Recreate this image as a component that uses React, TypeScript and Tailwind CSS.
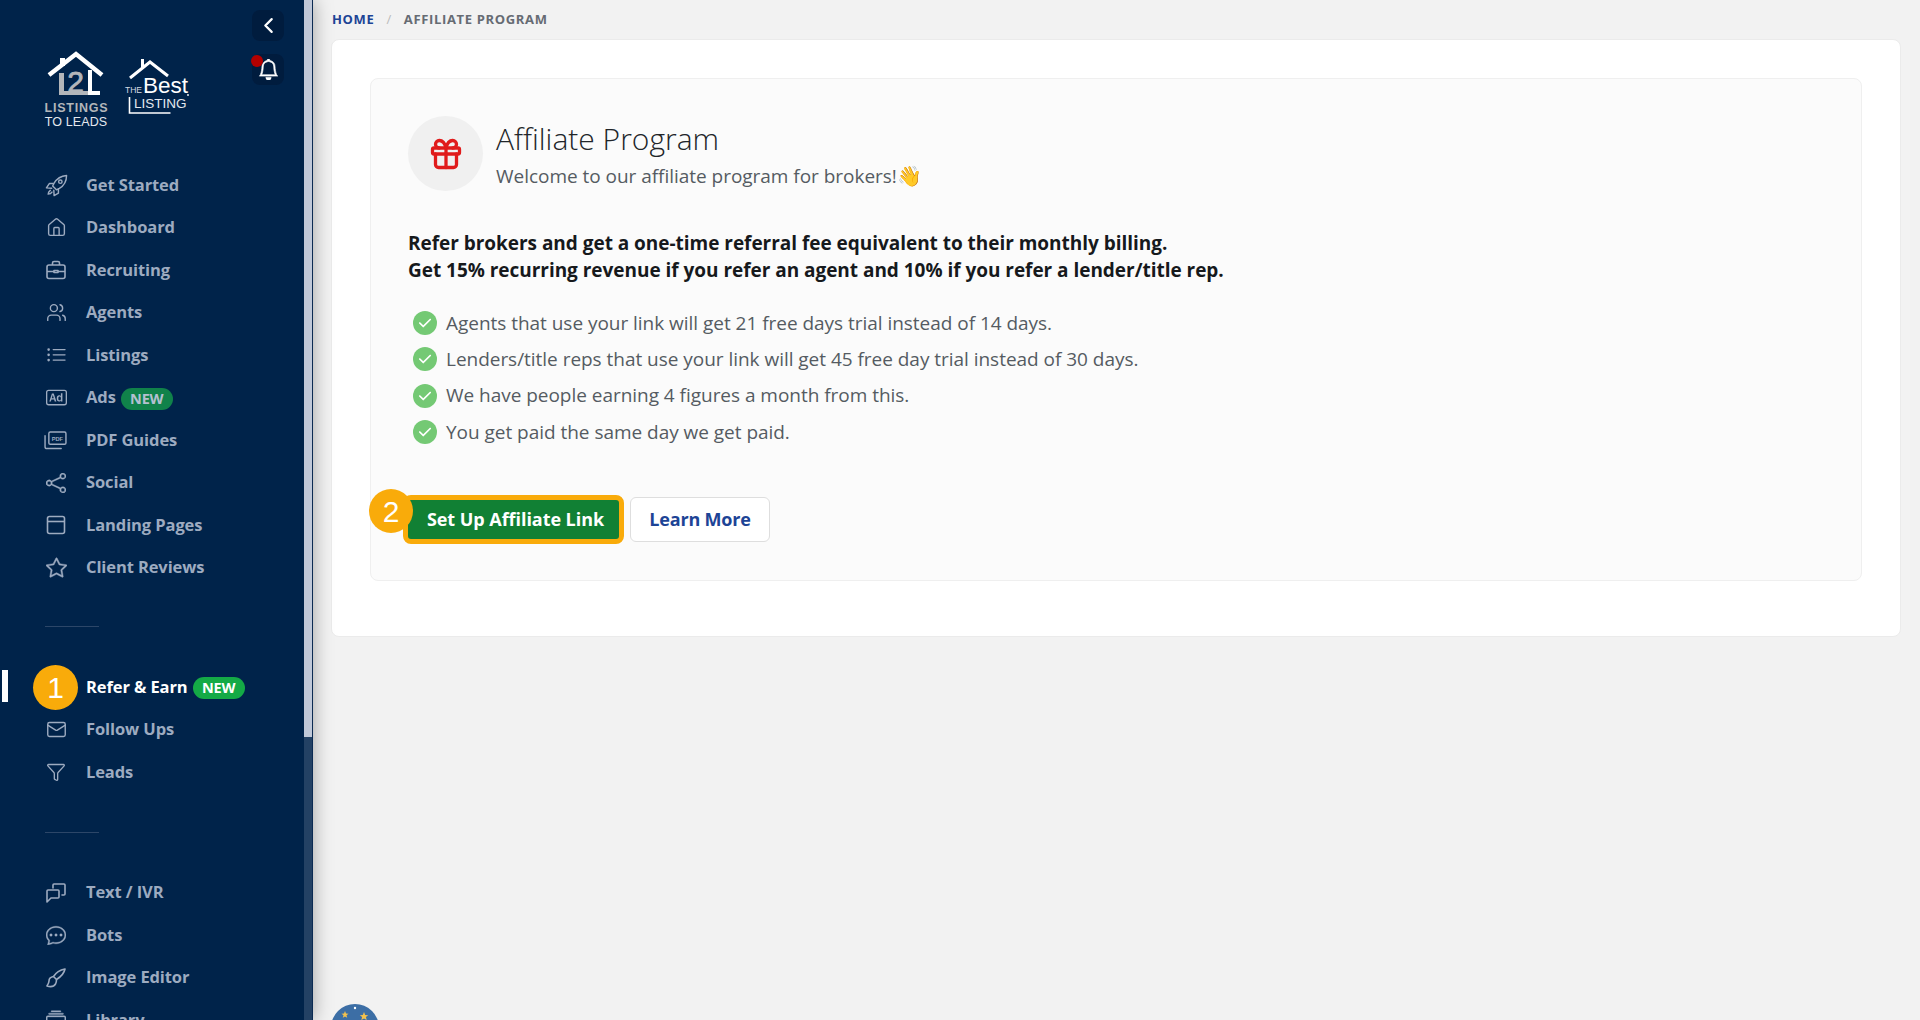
import { BsBadgeAd, BsBell, BsChatDots, BsChevronLeft, BsCollection, BsListUl, BsShare, BsStar } from "react-icons/bs";
import { Funnel, Gift, House, Mail, Users } from "lucide-react";
import { FaCheck } from "react-icons/fa6";
import type { ReactNode } from "react";

function RocketIcon() {
  return (
    <svg viewBox="0 0 24 24" className="-ml-[1px] h-[23px] w-[23px]" fill="none" stroke="currentColor" strokeWidth="1.5" strokeLinejoin="round" strokeLinecap="round">
      <path d="M22.500 1.500c-6 .5-10 3-13 8l-1.500 3 4 4 3-1.500c5-3 7.500-7 7.500-13.500z" />
      <path d="M8.500 10H4.500L1.500 14.500l5.500.3M14 15.500V20l-4.500 2.500-.3-5.500" />
      <circle cx="16" cy="8" r="1.800" />
      <path d="M5.500 17c-1.500 1-2.200 3-2.200 4 1 0 3-.5 4-2.200" />
    </svg>
  );
}

function BrushIcon() {
  return (
    <svg viewBox="0 0 20 20" className="h-[20px] w-[20px]" fill="none" stroke="currentColor" strokeWidth="1.6" strokeLinejoin="round">
      <path d="M19 1c-5 1-9 3.500-11.500 7.500l3 3C14.500 9 18 6 19 1z" />
      <path d="M7.500 8.500C4.500 9 3 11 3 13c0 2-1 3.500-2 5 3.500 1 7 .5 8.500-2 1-1.500 1-3 1-4.500" />
    </svg>
  );
}

function PdfIcon() {
  return (
    <svg viewBox="0 0 24 20" className="-ml-[2px] h-[19px] w-[23px]" fill="none" stroke="currentColor" strokeWidth="1.5">
      <rect x="5" y="1" width="18" height="13" rx="1.5" />
      <path d="M1 5v11.5A2 2 0 0 0 3 18.5h15" strokeLinecap="round" />
      <text x="14" y="10" textAnchor="middle" fontSize="6" fontWeight="700" fill="currentColor" stroke="none" fontFamily="Liberation Sans, sans-serif">PDF</text>
    </svg>
  );
}

function WindowIcon() {
  return (
    <svg viewBox="0 0 20 20" className="h-[20px] w-[20px]" fill="none" stroke="currentColor" strokeWidth="1.6">
      <rect x="1.5" y="1.500" width="17" height="17" rx="2" />
      <path d="M1.5 6.500h17" />
    </svg>
  );
}

function BriefcaseIcon() {
  return (
    <svg viewBox="0 0 20 20" className="h-[20px] w-[20px]" fill="none" stroke="currentColor" strokeWidth="1.6" strokeLinejoin="round">
      <rect x="1" y="5" width="18" height="13.500" rx="2" />
      <path d="M6.500 5V3a1.500 1.500 0 0 1 1.500-1.500h4A1.500 1.500 0 0 1 13.500 3v2M1 11.500h7M12 11.500h7M8 10.500h4v2H8z" />
    </svg>
  );
}

function ChatPairIcon() {
  return (
    <svg viewBox="0 0 20 20" className="h-[20px] w-[20px]" fill="none" stroke="currentColor" strokeWidth="1.6" strokeLinejoin="round" strokeLinecap="round">
      <path d="M7 5V2a1 1 0 0 1 1-1h10a1 1 0 0 1 1 1v9a1 1 0 0 1-1 1h-2" />
      <path d="M2 7h10a1 1 0 0 1 1 1v6a1 1 0 0 1-1 1H5l-4 4V8a1 1 0 0 1 1-1z" />
    </svg>
  );
}

function NewBadge({ active }: { active?: boolean }) {
  return (
    <span className={`ml-[5px] mt-[2px] flex h-[22px] w-[52px] items-center justify-center rounded-full text-[14.5px] font-bold tracking-[-0.2px] ${active ? "bg-[#14aa46] text-white" : "bg-[#10824a] text-[#b4c0d0]"}`}>
      NEW
    </span>
  );
}

type Item = { label: string; icon: ReactNode; badge?: boolean; active?: boolean };

const groupOne: Item[] = [
  { label: "Get Started", icon: <RocketIcon /> },
  { label: "Dashboard", icon: <House size={21} strokeWidth={1.6} /> },
  { label: "Recruiting", icon: <BriefcaseIcon /> },
  { label: "Agents", icon: <Users size={21} strokeWidth={1.6} /> },
  { label: "Listings", icon: <BsListUl size={21} /> },
  { label: "Ads", icon: <BsBadgeAd size={21} />, badge: true },
  { label: "PDF Guides", icon: <PdfIcon /> },
  { label: "Social", icon: <BsShare size={20} strokeWidth={0.3} /> },
  { label: "Landing Pages", icon: <WindowIcon /> },
  { label: "Client Reviews", icon: <BsStar size={21} strokeWidth={0.3} /> },
];

const groupTwo: Item[] = [
  { label: "Refer & Earn", icon: null, badge: true, active: true },
  { label: "Follow Ups", icon: <Mail size={21} strokeWidth={1.6} /> },
  { label: "Leads", icon: <Funnel size={20} strokeWidth={1.6} /> },
];

const groupThree: Item[] = [
  { label: "Text / IVR", icon: <ChatPairIcon /> },
  { label: "Bots", icon: <BsChatDots size={20} strokeWidth={0.3} /> },
  { label: "Image Editor", icon: <BrushIcon /> },
  { label: "Library", icon: <BsCollection size={20} strokeWidth={0.3} /> },
];

function NavRow({ item }: { item: Item }) {
  return (
    <div className={`flex h-[42.5px] shrink-0 items-center text-[16.5px] font-bold tracking-[-0.1px] ${item.active ? "text-white" : "text-[#9dabc0]"}`}>
      <span className="flex w-[42px] shrink-0 items-center justify-start pl-[2px] text-[#9dabc0]">{item.icon}</span>
      <span>{item.label}</span>
      {item.badge && <NewBadge active={item.active} />}
    </div>
  );
}

function Logos() {
  return (
    <svg width="150" height="84" viewBox="0 0 150 84">
      {/* 12 listings house */}
      <path d="M15 25h5v18h24v4H15z" fill="#b3b6ba" />
      <path d="M44 43h12v4H44zM44 22h4v22h-4z" fill="white" />
      <path d="M16 10h5v8h-5z" fill="white" />
      <path d="M5 27 L32 6 L58 27" fill="none" stroke="white" strokeWidth="4.500" />
      <text x="31.500" y="44" textAnchor="middle" fontSize="30" fill="#b3b6ba" stroke="#b3b6ba" strokeWidth="0.8" fontFamily="Liberation Sans, sans-serif">2</text>
      <text x="32.500" y="64" textAnchor="middle" fontSize="12.500" fontWeight="700" fill="#b3b6ba" letterSpacing="0.8" fontFamily="Liberation Sans, sans-serif">LISTINGS</text>
      <text x="32" y="78" textAnchor="middle" fontSize="12.500" fill="#e4e8ee" letterSpacing="0.1" fontFamily="Liberation Sans, sans-serif">TO LEADS</text>
      {/* the best listing house */}
      <path d="M97 11h3v9h-3z" fill="white" />
      <path d="M86 30 L106 14 L124 28" fill="none" stroke="white" strokeWidth="3" />
      <text x="81" y="45" fontSize="8.500" fill="#d5dbe4" fontFamily="Liberation Sans, sans-serif">THE</text>
      <text x="99" y="45" fontSize="22.500" fill="white" fontFamily="Liberation Sans, sans-serif">Best</text>
      <path d="M85.500 49v16h41" fill="none" stroke="white" strokeWidth="1.600" />
      <text x="90" y="60" fontSize="13.500" fill="#e4e8ee" fontFamily="Liberation Sans, sans-serif">LISTING</text>
      <circle cx="144" cy="47" r="0.900" fill="white" />
    </svg>
  );
}

function Sidebar() {
  return (
    <aside className="relative z-10 flex h-full w-[313px] shrink-0 bg-[#00234a] shadow-[0_0_18px_rgba(0,0,0,0.35)]">
      <div className="relative w-[304px] overflow-hidden">
        <div className="flex h-[164px] justify-between pl-[44px] pr-[20px] pt-[10px]">
          <div className="pt-[38px]"><Logos /></div>
          <div className="flex flex-col gap-[13px]">
            <div className="flex h-[31px] w-[32px] items-center justify-center rounded-lg bg-[#001c3e] text-white"><BsChevronLeft size={17} strokeWidth={1} /></div>
            <div className="relative flex h-[31px] w-[32px] items-center justify-center rounded-lg bg-[#001c3e] text-white">
              <BsBell size={21} strokeWidth={0.5} />
              <span className="absolute -left-[1px] top-[1px] h-[12px] w-[12px] rounded-full bg-[#b30000]" />
            </div>
          </div>
        </div>
        <nav className="flex flex-col pl-[44px]">
          {groupOne.map((item) => <NavRow key={item.label} item={item} />)}
          <div className="mb-[39px] ml-[1px] mt-[37px] h-px w-[54px] shrink-0 bg-[#2c4668]" />
          {groupTwo.map((item) => <NavRow key={item.label} item={item} />)}
          <div className="mb-[39px] ml-[1px] mt-[38px] h-px w-[54px] shrink-0 bg-[#2c4668]" />
          {groupThree.map((item) => <NavRow key={item.label} item={item} />)}
        </nav>
        {/* active marker and step badge lie over the nav */}
        <span className="absolute left-[2px] top-[670px] h-[32px] w-[6px] bg-white" />
        <span className="absolute left-[33px] top-[665px] flex h-[45px] w-[45px] items-center justify-center rounded-full bg-[#f9ab0a] text-[30px] text-white [font-family:'Liberation_Sans',sans-serif]">1</span>
      </div>
      <div className="flex h-full w-[9px] flex-col border-r border-[#0b2a52] bg-[#234164]">
        <div className="h-[737px] w-full bg-[#c0c8d8]" />
      </div>
    </aside>
  );
}

function CheckRow({ children }: { children: ReactNode }) {
  return (
    <li className="flex h-[36.3px] items-center gap-[9px]">
      <span className="flex h-[24px] w-[24px] shrink-0 items-center justify-center rounded-full bg-[#74c974] text-white"><FaCheck size={14} /></span>
      <span>{children}</span>
    </li>
  );
}

function AffiliateCard() {
  return (
    <section className="rounded-lg border border-[#ebebeb] bg-white pb-[55px] pl-[38px] pr-[38px] pt-[38px]">
      <div className="h-[503px] rounded-lg border border-[#efefef] bg-[#fbfbfb] pl-[37px] pt-[37px]">
        <div className="flex items-center gap-[13px]">
          <div className="flex h-[75px] w-[75px] items-center justify-center rounded-full bg-[#f0f0f0] text-[#e01b1b]"><Gift size={36} strokeWidth={2.2} /></div>
          <div className="pt-[2px]">
            <h1 className="mt-[1px] text-[30px] font-light leading-[38px] text-[#212529]">Affiliate Program</h1>
            <p className="mt-[4px] flex items-center text-[19px] leading-[28px] tracking-[-0.03px] text-[#555b62]">Welcome to our affiliate program for brokers!<span className="text-[20px] leading-none">👋</span></p>
          </div>
        </div>
        <p className="mt-[39px] text-[19px] font-bold leading-[27px] tracking-[-0.03px] text-[#16191c]">
          Refer brokers and get a one-time referral fee equivalent to their monthly billing.<br />
          Get 15% recurring revenue if you refer an agent and 10% if you refer a lender/title rep.
        </p>
        <ul className="ml-[5px] mt-[21px] text-[19px] tracking-[-0.03px] text-[#555b62]">
          <CheckRow>Agents that use your link will get 21 free days trial instead of 14 days.</CheckRow>
          <CheckRow>Lenders/title reps that use your link will get 45 free day trial instead of 30 days.</CheckRow>
          <CheckRow>We have people earning 4 figures a month from this.</CheckRow>
          <CheckRow>You get paid the same day we get paid.</CheckRow>
        </ul>
        <div className="relative -ml-[5px] mt-[45px] flex items-center gap-[6px]">
          <button className="flex h-[49px] w-[221px] items-center justify-center rounded-lg border-[5px] border-[#f9ab0a] bg-[#118034] pl-[4px] text-[18px] font-bold tracking-[-0.05px] text-white">Set Up Affiliate Link</button>
          <button className="flex h-[45px] w-[140px] items-center justify-center rounded-md border border-[#dedede] bg-white text-[18px] font-bold tracking-[-0.2px] text-[#1d4496]">Learn More</button>
          <span className="absolute -left-[34px] -top-[6px] flex h-[44px] w-[44px] items-center justify-center rounded-full bg-[#f9ab0a] text-[30px] text-white [font-family:'Liberation_Sans',sans-serif]">2</span>
        </div>
      </div>
    </section>
  );
}

function ChatWidget() {
  return (
    <svg viewBox="0 0 48 48" className="absolute bottom-[-32px] left-[18px] h-[48px] w-[48px]">
      <circle cx="24" cy="24" r="24" fill="#3c6ea5" />
      <path d="M14 7l1 2.500 2.500.3-2 1.500.7 2.500-2.200-1.400-2.200 1.400.7-2.500-2-1.500 2.500-.3z" fill="#f2c14e" />
      <path d="M33 8l1.200 3 3 .3-2.300 1.800.8 2.900-2.700-1.600-2.700 1.600.8-2.900-2.300-1.800 3-.3z" fill="#f2c14e" />
      <circle cx="24" cy="4" r="1.200" fill="#ffffff" />
    </svg>
  );
}

export default function App() {
  return (
    <div className="flex h-[1020px] w-[1920px] overflow-hidden bg-[#f2f2f2] [font-family:'Open_Sans',sans-serif]">
      <Sidebar />
      <main className="relative flex-1 pl-[18px] pr-[19px]">
        <div className="flex h-[39px] items-center gap-[12px] pl-[1px] text-[13px] font-bold tracking-[0.65px]">
          <span className="text-[#1d4496]">HOME</span>
          <span className="font-normal text-[#bbb]">/</span>
          <span className="text-[#666b73]">AFFILIATE PROGRAM</span>
        </div>
        <AffiliateCard />
        {/* chat widget peeking in at the bottom of the window */}
        <ChatWidget />
      </main>
    </div>
  );
}
